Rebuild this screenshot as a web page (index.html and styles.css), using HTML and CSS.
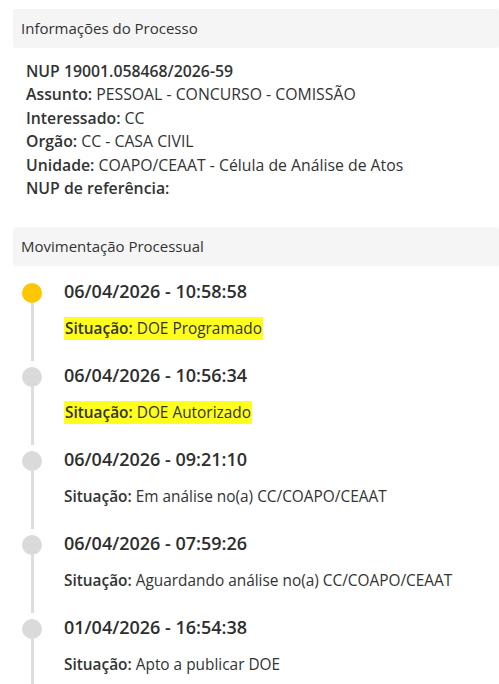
FILE: index.html
```html
<!DOCTYPE html>
<html lang="pt-BR">
<head>
    <meta charset="UTF-8">
    <meta name="viewport" content="width=device-width, initial-scale=1.0">
    <title>Consulta de Processo</title>
    <link rel="stylesheet" href="styles.css">
</head>
<body>
    <div class="page">
        <div class="section-title">Informações do Processo</div>
        <div class="info">
            <div class="info-line"><strong>NUP 19001.058468/2026-59</strong></div>
            <div class="info-line"><strong>Assunto:</strong> PESSOAL - CONCURSO - COMISSÃO</div>
            <div class="info-line"><strong>Interessado:</strong> CC</div>
            <div class="info-line"><strong>Orgão:</strong> CC - CASA CIVIL</div>
            <div class="info-line"><strong>Unidade:</strong> COAPO/CEAAT - Célula de Análise de Atos</div>
            <div class="info-line"><strong>NUP de referência:</strong></div>
        </div>

        <div class="section-title">Movimentação Processual</div>
        <ul class="timeline">
            <li class="step">
                <div class="marker"><span class="dot current"></span><span class="rail"></span></div>
                <div class="step-body">
                    <div class="step-date">06/04/2026 - 10:58:58</div>
                    <div class="step-status"><mark><strong>Situação:</strong> DOE Programado</mark></div>
                </div>
            </li>
            <li class="step">
                <div class="marker"><span class="dot"></span><span class="rail"></span></div>
                <div class="step-body">
                    <div class="step-date">06/04/2026 - 10:56:34</div>
                    <div class="step-status"><mark><strong>Situação:</strong> DOE Autorizado</mark></div>
                </div>
            </li>
            <li class="step">
                <div class="marker"><span class="dot"></span><span class="rail"></span></div>
                <div class="step-body">
                    <div class="step-date">06/04/2026 - 09:21:10</div>
                    <div class="step-status"><strong>Situação:</strong> Em análise no(a) CC/COAPO/CEAAT</div>
                </div>
            </li>
            <li class="step">
                <div class="marker"><span class="dot"></span><span class="rail"></span></div>
                <div class="step-body">
                    <div class="step-date">06/04/2026 - 07:59:26</div>
                    <div class="step-status"><strong>Situação:</strong> Aguardando análise no(a) CC/COAPO/CEAAT</div>
                </div>
            </li>
            <li class="step">
                <div class="marker"><span class="dot"></span><span class="rail"></span></div>
                <div class="step-body">
                    <div class="step-date">01/04/2026 - 16:54:38</div>
                    <div class="step-status"><strong>Situação:</strong> Apto a publicar DOE</div>
                </div>
            </li>
        </ul>
    </div>
</body>
</html>
```

FILE: styles.css
```css
/* Basic Styling */
body {
    font-family: "Open Sans", "Noto Sans", sans-serif;
    color: #333;
    background: #fff;
    margin: 0;
}

.page {
    padding: 9px 0 0 13px;
}

.section-title {
    background: #f5f5f5;
    border-radius: 3px;
    height: 39px;
    line-height: 39px;
    padding-left: 8px;
    font-size: 15px;
    font-weight: 500;
    color: #333;
}

.info {
    padding: 12px 13px 27px;
}

.info-line {
    font-size: 15.8px;
    line-height: 23.4px;
}

.info-line strong {
    font-weight: 600;
}

.timeline {
    list-style: none;
    margin: 0;
    padding: 17px 0 0 9px;
}

.step {
    display: flex;
    height: 78px;
    margin-bottom: 6px;
}

.marker {
    width: 20px;
    display: flex;
    flex-direction: column;
    align-items: center;
    flex-shrink: 0;
}

.dot {
    width: 20px;
    height: 20px;
    border-radius: 50%;
    background: #dadada;
    flex-shrink: 0;
}

.dot.current {
    background: #fcc600;
}

.rail {
    width: 3px;
    flex: 1;
    background: #dddddd;
}

.step:last-child .rail {
    margin-bottom: -20px;
}

.step-body {
    padding-left: 22px;
    margin-top: -2px;
}

.step-date {
    font-size: 18px;
    font-weight: 600;
    line-height: 20px;
    color: #2e2e2e;
}

.step-status {
    margin-top: 18px;
    font-size: 15.4px;
    line-height: 20px;
}

.step-status strong {
    font-weight: 600;
}

mark {
    background: #ffff1e;
    color: #333;
    padding: 1px 1px;
}
```
